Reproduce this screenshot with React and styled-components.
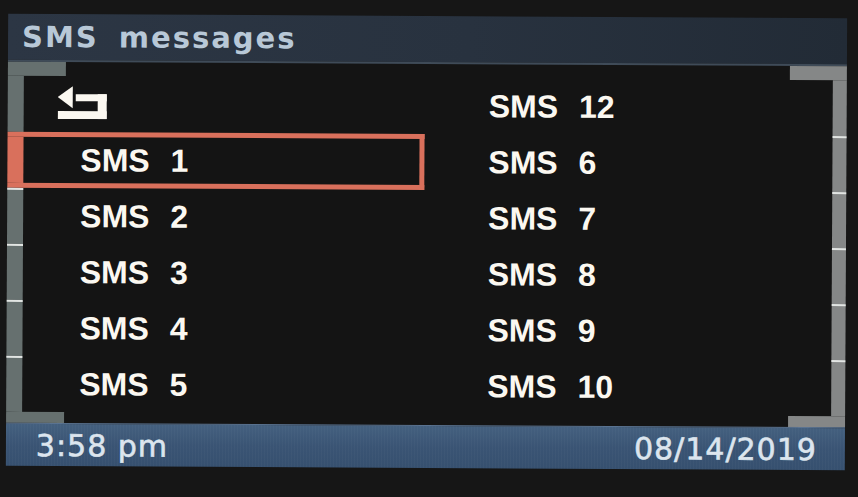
import React from 'react';
import styled, { createGlobalStyle } from 'styled-components';

const RED = '#d9705c';
const RAIL_LEFT = '#66706f';
const RAIL_RIGHT = '#858787';
const SEP = '#e2e5e3';
const INK = '#fbf8f1';

const GlobalStyle = createGlobalStyle`
  html, body {
    margin: 0;
    padding: 0;
    background: #151515;
  }
  body {
    width: 858px;
    height: 497px;
    overflow: hidden;
  }
`;

const Bezel = styled.div`
  width: 858px;
  height: 497px;
  box-sizing: border-box;
  padding: 16px 12px 0 7px;
  background: #161616;
`;

const Screen = styled.div`
  width: 839px;
  height: 452px;
  display: flex;
  flex-direction: column;
  background: #141414;
  transform: rotate(0.3deg);
`;

const TitleBar = styled.div`
  height: 48px;
  box-sizing: border-box;
  padding-left: 14px;
  display: flex;
  align-items: center;
  background: linear-gradient(90deg, #2c3644 0%, #28323f 55%, #222b36 100%);
  border-bottom: 2px solid #3f4b58;
  font: bold 29px 'DejaVu Sans', sans-serif;
  letter-spacing: 2px;
  word-spacing: 8px;
  color: #b8c8d7;
`;

const Body = styled.div`
  flex: 1;
  display: flex;
`;

const Pane = styled.div`
  display: flex;
  flex-direction: column;
  align-items: ${(p) => (p.$side === 'right' ? 'flex-end' : 'flex-start')};
  width: ${(p) => (p.$side === 'right' ? 'auto' : '417px')};
  flex: ${(p) => (p.$side === 'right' ? 1 : 'none')};
`;

const Cap = styled.div`
  width: ${(p) => (p.$side === 'right' ? 57 : 58)}px;
  height: ${(p) => (p.$h ? `${p.$h}px` : 'auto')};
  flex: ${(p) => (p.$h ? 'none' : 1)};
  background: ${(p) => (p.$side === 'right' ? RAIL_RIGHT : RAIL_LEFT)};
`;

const Row = styled.div`
  align-self: stretch;
  height: 56px;
  box-sizing: border-box;
  display: flex;
  flex-direction: ${(p) => (p.$side === 'right' ? 'row-reverse' : 'row')};
  border: ${(p) => (p.$selected ? `5px solid ${RED}` : 'none')};
  border-left: none;
`;

const RailCell = styled.div`
  width: ${(p) => (p.$side === 'right' ? 14 : 16)}px;
  flex: none;
  box-sizing: border-box;
  background: ${(p) => (p.$selected ? RED : p.$side === 'right' ? RAIL_RIGHT : RAIL_LEFT)};
  border-top: ${(p) => (p.$sep && !p.$selected ? `2px solid ${SEP}` : 'none')};
`;

const Label = styled.div`
  flex: 1;
  display: flex;
  align-items: center;
  padding-left: ${(p) => p.$pad}px;
  font: bold 32px 'Liberation Sans', Arial, sans-serif;
  color: ${INK};
  word-spacing: 12px;
  white-space: pre;
`;

const BackIcon = styled.svg`
  margin-top: -4px;
  fill: ${INK};
`;

const Footer = styled.div`
  height: 43px;
  box-sizing: border-box;
  display: flex;
  justify-content: space-between;
  align-items: center;
  padding: 0 28px 0 30px;
  background:
    repeating-linear-gradient(90deg, rgba(255, 255, 255, 0.025) 0 1px, transparent 1px 3px),
    linear-gradient(180deg, #44607f 0%, #3a5474 50%, #36506f 100%);
  border-top: 1px solid #5a7391;
  font: 30px 'DejaVu Sans', sans-serif;
  letter-spacing: 1px;
  color: #dce5ee;
  -webkit-text-stroke: 0.6px #dce5ee;
`;

const Back = () => (
  <BackIcon width="50" height="33" viewBox="0 0 50 33">
    <polygon points="0,11 15,0 15,22" />
    <rect x="18" y="8" width="31" height="7" />
    <rect x="40" y="8" width="9" height="25" />
    <rect x="0" y="25" width="49" height="8" />
  </BackIcon>
);

const left = ['back', 'SMS 1', 'SMS 2', 'SMS 3', 'SMS 4', 'SMS 5'];
const right = ['SMS 12', 'SMS 6', 'SMS 7', 'SMS 8', 'SMS 9', 'SMS 10'];
const SELECTED = 1;

export default function App() {
  return (
    <Bezel>
      <GlobalStyle />
      <Screen>
        <TitleBar>SMS messages</TitleBar>
        <Body>
          <Pane $side="left">
            <Cap $side="left" $h={14} />
            {left.map((item, i) => (
              <Row key={item} $side="left" $selected={i === SELECTED}>
                <RailCell $side="left" $sep={i > 0} $selected={i === SELECTED} />
                <Label $pad={item === 'back' ? 34 : 57}>
                  {item === 'back' ? <Back /> : item}
                </Label>
              </Row>
            ))}
            <Cap $side="left" />
          </Pane>
          <Pane $side="right">
            <Cap $side="right" $h={14} />
            {right.map((item, i) => (
              <Row key={item} $side="right">
                <RailCell $side="right" $sep={i > 0} />
                <Label $pad={64}>{item}</Label>
              </Row>
            ))}
            <Cap $side="right" />
          </Pane>
        </Body>
        <Footer>
          <span>3:58 pm</span>
          <span>08/14/2019</span>
        </Footer>
      </Screen>
    </Bezel>
  );
}
